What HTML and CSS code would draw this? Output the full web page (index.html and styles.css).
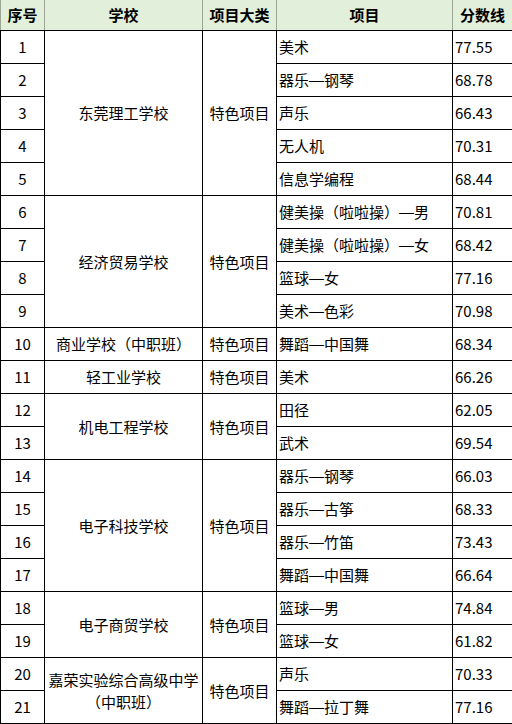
FILE: index.html
```html
<!DOCTYPE html>
<html lang="zh-CN">
<head>
<meta charset="utf-8">
<link rel="stylesheet" href="styles.css">
</head>
<body>
<table class="score-table">
  <colgroup>
    <col class="c-no"><col class="c-school"><col class="c-type"><col class="c-item"><col class="c-score">
  </colgroup>
  <thead>
    <tr><th>序号</th><th>学校</th><th>项目大类</th><th>项目</th><th>分数线</th></tr>
  </thead>
  <tbody>
    <tr><td class="no">1</td><td class="school" rowspan="5">东莞理工学校</td><td class="type" rowspan="5">特色项目</td><td class="item">美术</td><td class="score">77.55</td></tr>
    <tr><td class="no">2</td><td class="item">器乐<span class="dash">—</span>钢琴</td><td class="score">68.78</td></tr>
    <tr><td class="no">3</td><td class="item">声乐</td><td class="score">66.43</td></tr>
    <tr><td class="no">4</td><td class="item">无人机</td><td class="score">70.31</td></tr>
    <tr><td class="no">5</td><td class="item">信息学编程</td><td class="score">68.44</td></tr>
    <tr><td class="no">6</td><td class="school" rowspan="4">经济贸易学校</td><td class="type" rowspan="4">特色项目</td><td class="item">健美操（啦啦操）<span class="dash">—</span>男</td><td class="score">70.81</td></tr>
    <tr><td class="no">7</td><td class="item">健美操（啦啦操）<span class="dash">—</span>女</td><td class="score">68.42</td></tr>
    <tr><td class="no">8</td><td class="item">篮球<span class="dash">—</span>女</td><td class="score">77.16</td></tr>
    <tr><td class="no">9</td><td class="item">美术<span class="dash">—</span>色彩</td><td class="score">70.98</td></tr>
    <tr><td class="no">10</td><td class="school">商业学校（中职班）</td><td class="type">特色项目</td><td class="item">舞蹈<span class="dash">—</span>中国舞</td><td class="score">68.34</td></tr>
    <tr><td class="no">11</td><td class="school">轻工业学校</td><td class="type">特色项目</td><td class="item">美术</td><td class="score">66.26</td></tr>
    <tr><td class="no">12</td><td class="school" rowspan="2">机电工程学校</td><td class="type" rowspan="2">特色项目</td><td class="item">田径</td><td class="score">62.05</td></tr>
    <tr><td class="no">13</td><td class="item">武术</td><td class="score">69.54</td></tr>
    <tr><td class="no">14</td><td class="school" rowspan="4">电子科技学校</td><td class="type" rowspan="4">特色项目</td><td class="item">器乐<span class="dash">—</span>钢琴</td><td class="score">66.03</td></tr>
    <tr><td class="no">15</td><td class="item">器乐<span class="dash">—</span>古筝</td><td class="score">68.33</td></tr>
    <tr><td class="no">16</td><td class="item">器乐<span class="dash">—</span>竹笛</td><td class="score">73.43</td></tr>
    <tr><td class="no">17</td><td class="item">舞蹈<span class="dash">—</span>中国舞</td><td class="score">66.64</td></tr>
    <tr><td class="no">18</td><td class="school" rowspan="2">电子商贸学校</td><td class="type" rowspan="2">特色项目</td><td class="item">篮球<span class="dash">—</span>男</td><td class="score">74.84</td></tr>
    <tr><td class="no">19</td><td class="item">篮球<span class="dash">—</span>女</td><td class="score">61.82</td></tr>
    <tr><td class="no">20</td><td class="school" rowspan="2">嘉荣实验综合高级中学（中职班）</td><td class="type" rowspan="2">特色项目</td><td class="item">声乐</td><td class="score">70.33</td></tr>
    <tr><td class="no">21</td><td class="item">舞蹈<span class="dash">—</span>拉丁舞</td><td class="score">77.16</td></tr>
  </tbody>
</table>
</body>
</html>
```
FILE: styles.css
```css
html, body {
  margin: 0;
  padding: 0;
  background: #ffffff;
}

.score-table {
  width: 512px;
  table-layout: fixed;
  border-collapse: collapse;
  font-family: "Noto Sans CJK SC", "Microsoft YaHei", sans-serif;
  font-size: 15px;
  color: #000;
}

.c-no { width: 44px; }
.c-school { width: 158px; }
.c-type { width: 74px; }
.c-item { width: 176px; }
.c-score { width: 60px; }

.score-table th {
  height: 30px;
  padding: 0;
  background: #e2efda;
  font-weight: bold;
  text-align: center;
  vertical-align: middle;
  line-height: 20px;
  border-top: none;
  border-left: 1px solid #9aa596;
  border-right: 1px solid #9aa596;
  border-bottom: 1px solid #000;
}

.score-table td {
  height: 32px;
  padding: 0 2px;
  border: 1px solid #000;
  vertical-align: middle;
  line-height: 22px;
  white-space: normal;
}

.no, .school, .type { text-align: center; }
.item, .score { text-align: left; }
.school { padding: 0 1px; }

.dash {
  font-family: "Liberation Sans", sans-serif;
  display: inline-block;
  width: 15px;
  position: relative;
  top: -1px;
}
```
